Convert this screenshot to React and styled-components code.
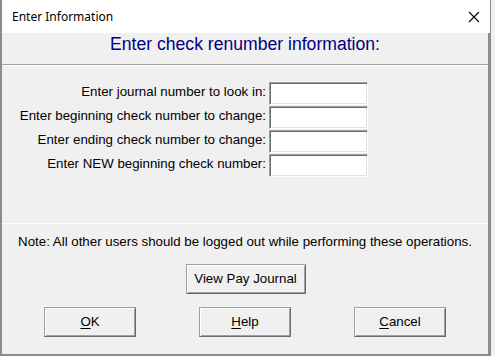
import React from "react";
import styled, { createGlobalStyle } from "styled-components";

const GlobalStyle = createGlobalStyle`
  html, body { margin: 0; padding: 0; background: #f0f0f0; }
  #root { width: 495px; height: 356px; overflow: hidden; }
`;

const Window = styled.div`
  box-sizing: border-box;
  width: 491px;
  height: 356px;
  border-left: 2px solid #8c8c8c;
  border-right: 1px solid #8c8c8c;
  display: flex;
  flex-direction: column;
  background: #f0f0f0;
  font-family: "Liberation Sans", Arial, sans-serif;
  color: #000;
`;

const TitleBar = styled.div`
  height: 33px;
  flex: none;
  background: #fff;
  display: flex;
  align-items: center;
  justify-content: space-between;
  padding: 0 10px 0 10px;
  font-family: "Noto Sans", "Open Sans", sans-serif;
  font-size: 12px;
`;

const CloseIcon = () => (
  <svg width="12" height="12" viewBox="0 0 12 12">
    <path d="M1 1 L11 11 M11 1 L1 11" stroke="#000" strokeWidth="1.1" fill="none" />
  </svg>
);

const Client = styled.div`
  flex: 1;
  display: flex;
  flex-direction: column;
  border-right: 2px solid #8c8c8c;
  border-bottom: 2px solid #8c8c8c;
`;

const Header = styled.div`
  height: 32px;
  flex: none;
  border-bottom: 1px solid #a0a0a0;
  box-shadow: 0 1px 0 #fff;
  text-align: center;
  color: #000080;
  font-size: 17.6px;
  line-height: 20px;
  padding-top: 1px;
  box-sizing: border-box;
`;

const Form = styled.div`
  height: 159px;
  flex: none;
  box-sizing: border-box;
  padding-top: 17px;
  border-bottom: 1px solid #fff;
  display: grid;
  grid-template-columns: 264px 99px;
  grid-auto-rows: 23px;
  column-gap: 3px;
  row-gap: 1px;
  align-content: start;
`;

const Label = styled.label`
  font-size: 13.3px;
  text-align: right;
  line-height: 20px;
  white-space: nowrap;
`;

const Field = styled.input`
  box-sizing: border-box;
  width: 99px;
  height: 23px;
  margin: 0;
  padding: 0 3px;
  background: #fff;
  border: 1px solid;
  border-color: #a0a0a0 #fff #fff #a0a0a0;
  box-shadow: inset 1px 1px 0 #696969, inset -1px -1px 0 #e3e3e3;
  outline: none;
  font-family: inherit;
  font-size: 13.3px;
`;

const Lower = styled.div`
  flex: 1;
  display: flex;
  flex-direction: column;
  align-items: stretch;
`;

const Note = styled.div`
  font-size: 13.3px;
  text-align: center;
  line-height: 16px;
  padding-top: 10px;
  height: 40px;
  box-sizing: border-box;
  white-space: nowrap;
`;

const Centered = styled.div`
  display: flex;
  justify-content: center;
  padding-left: 1px;
`;

const ButtonRow = styled.div`
  display: flex;
  gap: 63px;
  padding-left: 42px;
  margin-top: 13px;
`;

const Button = styled.button`
  box-sizing: border-box;
  width: ${(p) => p.$w || 92}px;
  height: 30px;
  margin: 0;
  padding: 0 0 1px;
  background: #f0f0f0;
  border: 1px solid;
  border-color: #a0a0a0 #696969 #696969 #a0a0a0;
  box-shadow: inset 1px 1px 0 #fff, inset -1px -1px 0 #a0a0a0;
  font-family: "Liberation Sans", Arial, sans-serif;
  font-size: 13.3px;
  color: #000;
`;

const Key = styled.span`
  text-decoration: underline;
  text-underline-offset: 2px;
`;

const rows = [
  "Enter journal number to look in:",
  "Enter beginning check number to change:",
  "Enter ending check number to change:",
  "Enter NEW beginning check number:",
];

export default function App() {
  return (
    <>
      <GlobalStyle />
      <Window>
        <TitleBar>
          <span>Enter Information</span>
          <CloseIcon />
        </TitleBar>
        <Client>
          <Header>Enter check renumber information:</Header>
          <Form>
            {rows.map((r, i) => (
              <React.Fragment key={i}>
                <Label>{r}</Label>
                <Field />
              </React.Fragment>
            ))}
          </Form>
          <Lower>
            <Note>Note: All other users should be logged out while performing these operations.</Note>
            <Centered>
              <Button $w={120}>View Pay Journal</Button>
            </Centered>
            <ButtonRow>
              <Button><Key>O</Key>K</Button>
              <Button><Key>H</Key>elp</Button>
              <Button><Key>C</Key>ancel</Button>
            </ButtonRow>
          </Lower>
        </Client>
      </Window>
    </>
  );
}
